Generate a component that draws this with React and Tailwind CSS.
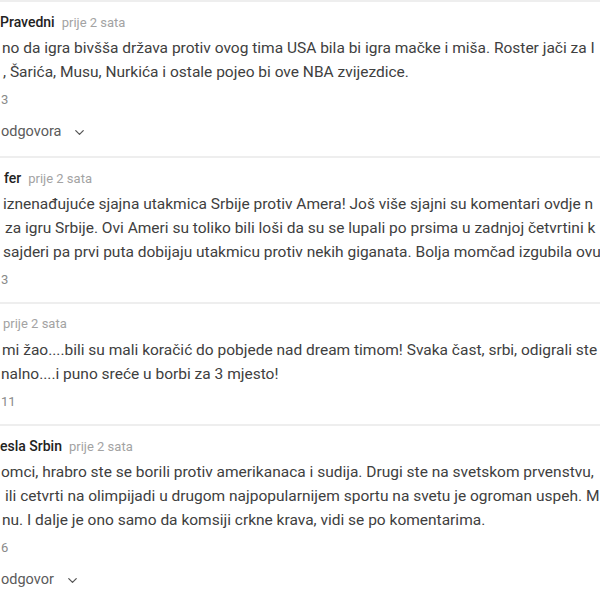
import { ChevronDown } from "lucide-react";

/* ======================================================
   DATA
====================================================== */

const comments = [
  {
    name: "Pravedni",
    nameX: "pl-0",
    lines: [
      { x: "pl-[2px]", text: "no da igra bivšša država protiv ovog tima USA bila bi igra mačke i miša. Roster jači za I" },
      { x: "pl-[3px]", text: ", Šarića, Musu, Nurkića i ostale pojeo bi ove NBA zvijezdice." },
    ],
    likes: "3",
    replies: "odgovora",
  },
  {
    name: "fer",
    nameX: "pl-[4px]",
    lines: [
      { x: "pl-[3px]", text: "iznenađujuće sjajna utakmica Srbije protiv Amera! Još više sjajni su komentari ovdje n" },
      { x: "pl-[5px]", text: "za igru Srbije. Ovi Ameri su toliko bili loši da su se lupali po prsima u zadnjoj četvrtini k" },
      { x: "pl-[3px]", text: "sajderi pa prvi puta dobijaju utakmicu protiv nekih giganata. Bolja momčad izgubila ovu" },
    ],
    likes: "3",
  },
  {
    name: null,
    nameX: "pl-[3px]",
    lines: [
      { x: "pl-[2px]", text: "mi žao....bili su mali koračić do pobjede nad dream timom! Svaka čast, srbi, odigrali ste" },
      { x: "pl-[1px]", text: "nalno....i puno sreće u borbi za 3 mjesto!" },
    ],
    likes: "11",
  },
  {
    name: "esla Srbin",
    nameX: "pl-0",
    lines: [
      { x: "pl-[1px]", text: "omci, hrabro ste se borili protiv amerikanaca i sudija. Drugi ste na svetskom prvenstvu," },
      { x: "pl-[5px]", text: "ili cetvrti na olimpijadi u drugom najpopularnijem sportu na svetu je ogroman uspeh. M" },
      { x: "pl-[2px]", text: "nu. I dalje je ono samo da komsiji crkne krava, vidi se po komentarima." },
    ],
    likes: "6",
    replies: "odgovor",
  },
];

/* ======================================================
   PAGE
====================================================== */

export default function App() {
  return (
    <main
      className="w-[600px] h-[600px] overflow-hidden bg-white"
      style={{ fontFamily: "Roboto, 'Liberation Sans', sans-serif" }}
    >
      {comments.map((c, i) => (
        <div key={i}>
          <div className="h-[2px] bg-[#eeeeee]" />
          <Comment comment={c} />
        </div>
      ))}
    </main>
  );
}

/* ======================================================
   COMPONENTS
====================================================== */

function Comment({ comment }) {
  return (
    <section className="pt-[10px] pb-[12px]">
      <div className={`flex items-baseline gap-[7px] h-[20px] leading-[20px] whitespace-nowrap ${comment.nameX}`}>
        {comment.name && (
          <span className="text-[14px] font-medium text-[#222222]">
            {comment.name}
          </span>
        )}
        <span className="text-[13px] text-[#a3a3a3]">prije 2 sata</span>
      </div>

      <div className="mt-[4px] text-[15.5px] leading-[24px] text-[#404040] whitespace-nowrap">
        {comment.lines.map((l, i) => (
          <p key={i} className={l.x}>
            {l.text}
          </p>
        ))}
      </div>

      <p className="mt-[6px] h-[20px] leading-[20px] text-[13px] text-[#8a8a8a] pl-[1px]">
        {comment.likes}
      </p>

      {comment.replies && (
        <div className="mt-[10px] h-[24px] flex items-center gap-[11px] pl-[1px] text-[14.5px] text-[#5a5a5a]">
          <span>{comment.replies}</span>
          <ChevronDown size={15} strokeWidth={2} className="text-[#555555]" />
        </div>
      )}
    </section>
  );
}
